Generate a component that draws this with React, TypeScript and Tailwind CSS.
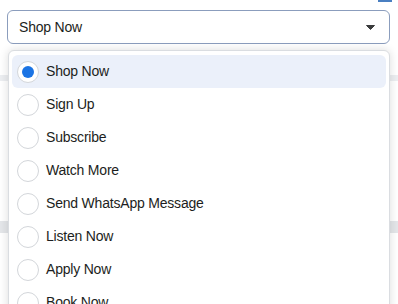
import React from 'react';

const options = [
  'Shop Now',
  'Sign Up',
  'Subscribe',
  'Watch More',
  'Send WhatsApp Message',
  'Listen Now',
  'Apply Now',
  'Book Now',
];

export default function App() {
  const selected = 'Shop Now';

  return (
    <div className="relative w-[398px] h-[304px] overflow-hidden bg-white font-['Liberation_Sans',Arial,sans-serif] text-[#1c1e21] tracking-[-0.2px]">
      {/* sliver of the control above */}
      <div className="flex justify-end pr-[6px]">
        <div className="w-[14px] h-[2px] bg-[#4a7fc1]" />
      </div>

      {/* select */}
      <div className="mt-[8px] ml-[7px] w-[383px] h-[34px] flex items-center justify-between pl-[11px] pr-[14px] border border-[#8b9dbd] rounded-[6px] bg-white">
        <span className="text-[14px]">{selected}</span>
        <svg width="9" height="5" viewBox="0 0 9 5">
          <path d="M0.5 0.5 H8.5 L4.5 4.5 Z" fill="#3a3b3c" stroke="#3a3b3c" strokeLinejoin="round" />
        </svg>
      </div>

      {/* page content behind the menu */}
      <div className="mt-[31px] h-[6px] bg-[#eceef1]" />
      <div className="mt-[140px] h-[12px] bg-[#e4e6e9]" />

      {/* open menu */}
      <div className="absolute left-[8px] top-[50px] w-[382px] h-[280px] bg-white border border-[#dadde1] rounded-t-[6px] shadow-[0_0_10px_rgba(0,0,0,0.14)] px-[3px] pt-[4px]">
        {options.map((o) => {
          const on = o === selected;
          return (
            <div
              key={o}
              className={`h-[33px] flex items-center pl-[5px] gap-[7px] rounded-[6px] ${on ? 'bg-[#ebf0fa]' : ''}`}
            >
              <div className="w-[22px] h-[22px] rounded-full border border-[#d3d6da] bg-white flex items-center justify-center">
                {on && <div className="w-[12px] h-[12px] rounded-full bg-[#1b74e4]" />}
              </div>
              <span className="text-[14px]">{o}</span>
            </div>
          );
        })}
      </div>
    </div>
  );
}
